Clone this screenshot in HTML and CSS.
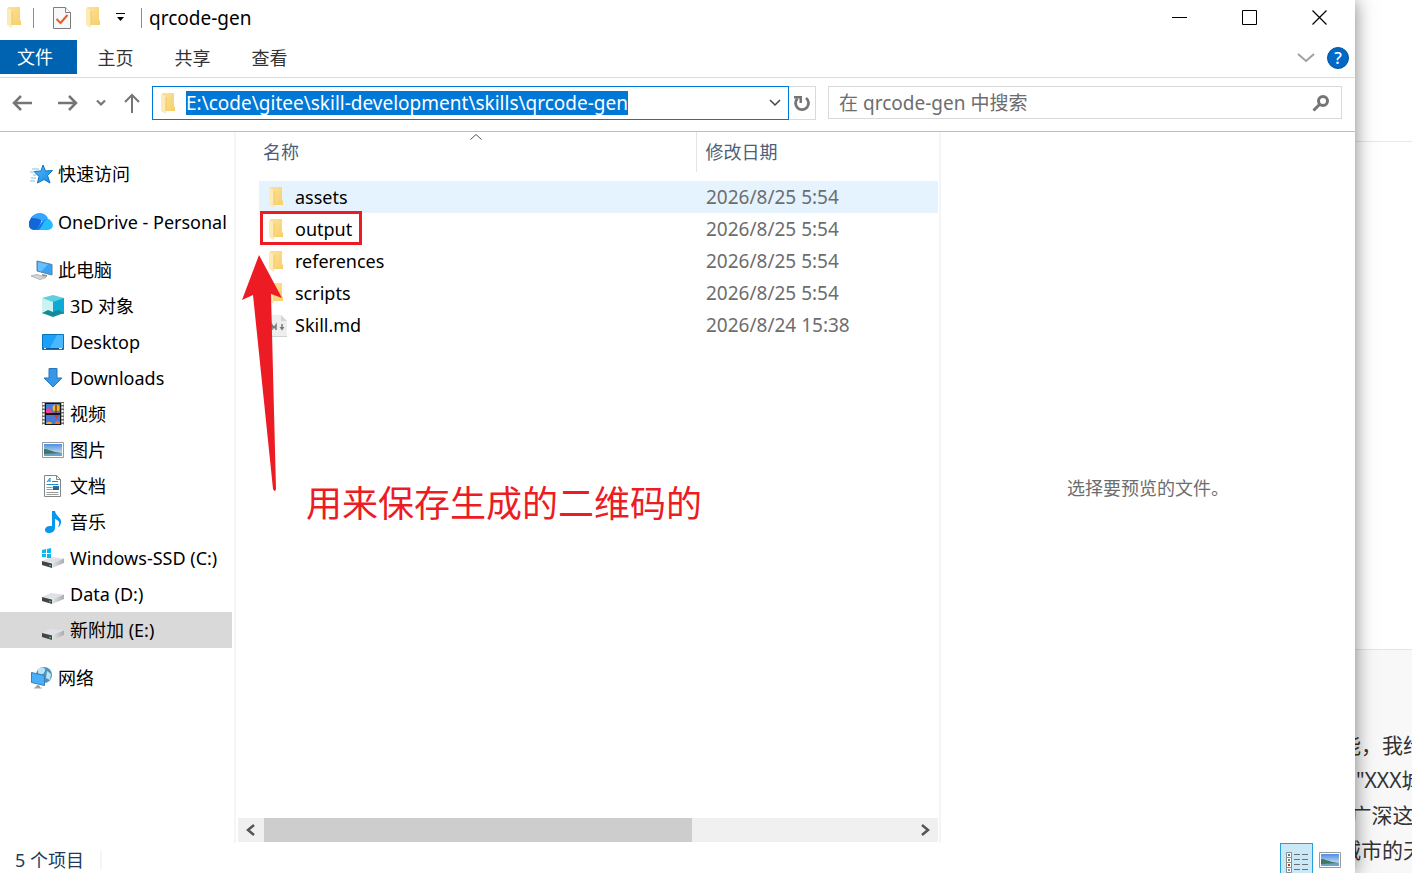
FILE: index.html
```html
<!DOCTYPE html>
<html lang="zh-CN">
<head>
    <meta charset="UTF-8">
    <meta name="viewport" content="width=device-width, initial-scale=1.0">
    <title>qrcode-gen</title>
    <link rel="stylesheet" href="styles.css">
</head>
<body>
    <!-- shared icons -->
    <svg class="sprites" aria-hidden="true">
        <defs>
            <linearGradient id="gold" x1="0" y1="0" x2="1" y2="1">
                <stop offset="0" stop-color="#fde29a"/><stop offset="1" stop-color="#f6cf6a"/>
            </linearGradient>
            <linearGradient id="sky" x1="0" y1="0" x2="0" y2="1">
                <stop offset="0" stop-color="#4f8fe0"/><stop offset="1" stop-color="#e8f3fb"/>
            </linearGradient>
            <linearGradient id="blue" x1="0" y1="0" x2="1" y2="1">
                <stop offset="0" stop-color="#59b9fa"/><stop offset="1" stop-color="#1389e6"/>
            </linearGradient>
            <linearGradient id="metal" x1="0" y1="0" x2="1" y2="0">
                <stop offset="0" stop-color="#e3e5e8"/><stop offset="1" stop-color="#a9adb2"/>
            </linearGradient>
        </defs>
        <symbol id="folder" viewBox="0 0 14 21">
            <path d="M1 0h12v13l1 1v4H3z" fill="url(#gold)"/>
            <path d="M0 1l5 2.500V21L0 18z" fill="#fdeab4"/>
            <path d="M5 4v14" stroke="#efc766"/>
        </symbol>
        <symbol id="drive" viewBox="0 0 22 14">
            <path d="M0 6L9 2l13 1.500L12 8z" fill="#dfe1e4"/>
            <path d="M0 6l10 2.500V13L0 10z" fill="#414549"/>
            <path d="M10 8.500l12-5V8l-12 5z" fill="url(#metal)"/>
            <path d="M7 9.500l2 .5v1.500L7 11z" fill="#35c24a"/>
        </symbol>
        <symbol id="photo" viewBox="0 0 22 16">
            <path d="M.5.5h21v15H.5z" fill="#fff" stroke="#9a9a9a"/>
            <path d="M2 2h18v12H2z" fill="url(#sky)"/>
            <path d="M2 7c4 0 7 2 11 3l7 1v1H2z" fill="#3d7862"/>
            <path d="M2 12l18-1v3H2z" fill="#6aa3c9"/>
        </symbol>
    </svg>

    <div class="desktop">
        <main class="window">
            <header class="titlebar">
                <svg class="folder"><use href="#folder"/></svg>
                <span class="divider"></span>
                <button class="quick" aria-label="属性">
                    <svg width="18" height="22" viewBox="0 0 18 22">
                        <path d="M.5.5h12l5 5v16H.5z" fill="#f7f8fa" stroke="#7d7d7d"/>
                        <path d="M12.500.5v5h5" fill="#fff" stroke="#7d7d7d"/>
                        <path d="M3.500 12l4 4 7-8" fill="none" stroke="#f0591c" stroke-width="2"/>
                    </svg>
                </button>
                <button class="quick" aria-label="新建文件夹"><svg class="folder"><use href="#folder"/></svg></button>
                <button class="quick" aria-label="自定义快速访问工具栏">
                    <svg width="9" height="9" viewBox="0 0 9 9"><path d="M0 .5h9" stroke="#000"/><path d="M1 4h7L4.500 8z"/></svg>
                </button>
                <span class="divider"></span>
                <h1>qrcode-gen</h1>
                <div class="controls">
                    <button aria-label="最小化"><svg width="16" height="16" viewBox="0 0 16 16"><path d="M0 7.500h15" stroke="#000"/></svg></button>
                    <button aria-label="最大化"><svg width="16" height="16" viewBox="0 0 16 16"><path d="M.5.5h14v14H.5z" fill="none" stroke="#000"/></svg></button>
                    <button aria-label="关闭"><svg width="16" height="16" viewBox="0 0 16 16"><path d="M.5.5l14 14M14.500.5l-14 14" stroke="#000" stroke-width="1.200"/></svg></button>
                </div>
            </header>

            <nav class="tabs">
                <button class="tab active">文件</button>
                <button class="tab">主页</button>
                <button class="tab">共享</button>
                <button class="tab">查看</button>
                <div class="tabs-end">
                    <button aria-label="展开功能区"><svg width="18" height="10" viewBox="0 0 18 10"><path d="M1 1l8 7 8-7" fill="none" stroke="#a0a0a0" stroke-width="2"/></svg></button>
                    <button class="help" aria-label="帮助">?</button>
                </div>
            </nav>

            <div class="addressbar">
                <div class="history">
                    <button class="back" aria-label="后退"><svg width="20" height="18" viewBox="0 0 20 18"><path d="M20 9H2M9 2L2 9l7 7" fill="none" stroke="#757575" stroke-width="2.500"/></svg></button>
                    <button aria-label="前进"><svg width="20" height="18" viewBox="0 0 20 18"><path d="M0 9h18M11 2l7 7-7 7" fill="none" stroke="#757575" stroke-width="2.500"/></svg></button>
                    <button aria-label="最近浏览的位置"><svg width="10" height="8" viewBox="0 0 10 8"><path d="M1 1.500l4 4 4-4" fill="none" stroke="#757575" stroke-width="2.200"/></svg></button>
                    <button aria-label="上移"><svg width="16" height="20" viewBox="0 0 16 20"><path d="M8 20V2M1 9l7-7 7 7" fill="none" stroke="#757575" stroke-width="2"/></svg></button>
                </div>
                <div class="address">
                    <svg class="folder"><use href="#folder"/></svg>
                    <input id="path" type="text" aria-label="地址" spellcheck="false" value="E:\code\gitee\skill-development\skills\qrcode-gen">
                    <button aria-label="以前的位置"><svg width="12" height="8" viewBox="0 0 12 8"><path d="M1 1l5 5 5-5" fill="none" stroke="#444" stroke-width="1.500"/></svg></button>
                </div>
                <button class="refresh" aria-label="刷新">
                    <svg width="18" height="18" viewBox="0 0 18 18">
                        <path d="M4.500 4.500a6.500 6.500 0 1 0 8.500-.5" fill="none" stroke="#757575" stroke-width="2.800"/>
                        <path d="M1 2h8v7H6.500V4.500H1z" fill="#757575"/>
                    </svg>
                </button>
                <div class="search">
                    <input type="search" aria-label="搜索" placeholder="在 qrcode-gen 中搜索">
                    <svg width="18" height="18" viewBox="0 0 18 18"><circle cx="11" cy="7" r="4.500" fill="none" stroke="#757575" stroke-width="3"/><path d="M8 10l-6.500 6.500" stroke="#757575" stroke-width="3"/></svg>
                </div>
            </div>

            <div class="content">
                <nav class="sidebar">
                    <a href="#quick">
                        <svg class="icon" viewBox="0 0 24 24">
                            <path d="M14 3l2.500 6 7-.5-5 5 2.500 7.500-6-3.500L8.500 21l1.500-6.500L5 9.500l7-.5z" fill="url(#blue)" stroke="#1273be"/>
                            <path d="M3 7h7M1 10h5M4 13h3M2 16h5M1 19h5" stroke="#7fc0ef"/>
                        </svg>快速访问
                    </a>
                    <a href="#onedrive">
                        <svg class="icon" viewBox="0 0 24 24">
                            <path d="M6 20A6 6 0 0 1 1 10a7 7 0 0 1 7-5l6 2-5 13z" fill="#1267d8"/>
                            <path d="M2 8C6 2 15 1 19 8l-4 5c-2-4-8-5-13-5z" fill="#36a5fb"/>
                            <path d="M5 20c4 0 5-5 8-8 3-4 7-4 9-1 4 4 1 9-3 9z" fill="#25bcfb"/>
                            <path d="M5 20c4 0 5-4 8-8 2-2 4-3 6-3-6 1-5 9-10 11z" fill="#116ff0"/>
                        </svg>OneDrive - Personal
                    </a>
                    <div class="group">
                        <a href="#pc">
                            <svg class="icon" viewBox="0 0 24 24">
                                <path d="M8 3l15 3.500v10.500L8 13z" fill="#36a3f7" stroke="#607f99"/>
                                <path d="M9 4l10 2.500-7 7-3-1z" fill="#69c0ff"/>
                                <path d="M13 16l5 1v2l-5-1z" fill="#8d969d"/>
                                <path d="M2 18l6-1.500 9 3-6 2z" fill="#d4d7da" stroke="#b0b5ba"/>
                            </svg>此电脑
                        </a>
                        <a class="child" href="#3d">
                            <svg class="icon" viewBox="0 0 24 24">
                                <path d="M1 4l11-3 11 3-6 4H7z" fill="#5ecfe0"/>
                                <path d="M1 4l6 4v11l-6 1z" fill="#b5f0ef"/><path d="M23 4l-6 4v11l6 1z" fill="#08a2d3"/>
                                <path d="M1 4l11 4v12l-11-2z" fill="#cdf3f0"/><path d="M23 4l-11 4v12l11-2z" fill="#0fa9d6"/>
                                <path d="M1 19l6-3 5 2 5-2 6 3-11 4z" fill="#128a99"/>
                            </svg>3D 对象
                        </a>
                        <a class="child" href="#desktop">
                            <svg class="icon" viewBox="0 0 24 24">
                                <path d="M1.500 4.500h21v15h-21z" fill="#1ba1fa" stroke="#0876bd"/>
                                <path d="M16 5h6v13H9z" fill="#4bb7ff"/><path d="M2 18.500h20" stroke="#075d9c"/><path d="M3 18.500h2M18 18.500h3" stroke="#fff"/>
                            </svg>Desktop
                        </a>
                        <a class="child" href="#downloads">
                            <svg class="icon" viewBox="0 0 24 24"><path d="M8 2.500h8V12h5l-9 9-9-9h5z" fill="#3995e5" stroke="#2777bd"/></svg>Downloads
                        </a>
                        <a class="child" href="#videos">
                            <svg class="icon" viewBox="0 0 24 24">
                                <path d="M1 0h22v23H1z" fill="#6a6a6a"/>
                                <path d="M2.500 1v22M21.500 1v22" stroke="#fff" stroke-width="2" stroke-dasharray="2 1.500"/>
                                <path d="M4 1h16v22H4z" fill="#151515"/>
                                <path d="M5 2h14v9H5zM5 13h14v9H5z" fill="#4a7ad8"/>
                                <path d="M5 11V8l3-2 4 5z" fill="#ef428b"/><circle cx="15" cy="6" r="3.500" fill="#f1b91c"/><path d="M15 2.500v7M13.500 10h3" stroke="#8c3d20" stroke-width="1.500"/>
                                <path d="M13 13h5l-2.500 4z" fill="#d34327"/><path d="M5 22c0-3 6-3 6 0z" fill="#efb52b"/><path d="M14 22c0-4 5-4 5 0z" fill="#f47124"/>
                            </svg>视频
                        </a>
                        <a class="child" href="#pictures">
                            <svg class="icon"><use href="#photo" x="1" y="4" width="22" height="16"/></svg>图片
                        </a>
                        <a class="child" href="#documents">
                            <svg class="icon" viewBox="0 0 24 24">
                                <path d="M3.500 1.500h12l4 4v17h-16z" fill="#fff" stroke="#858585"/><path d="M15.500 1.500v4h4" fill="none" stroke="#858585"/>
                                <path d="M6 8l3-4v4M7 7h2" fill="none" stroke="#178fc8"/>
                                <path d="M11 7.500h6M5.500 10.500h12" stroke="#178fc8"/><path d="M5.500 13.500h6M5.500 15.500h6M5.500 18.500h12M5.500 20.500h12" stroke="#9a9a9a"/>
                                <path d="M12 12h6v4h-6z" fill="#2d69ad"/><path d="M12 14l6 1v1h-6z" fill="#2b6957"/>
                            </svg>文档
                        </a>
                        <a class="child" href="#music">
                            <svg class="icon" viewBox="0 0 24 24">
                                <path d="M11 1h3c1 6 7 6 6 12-1 3-2 4-3 4 3-5 0-7-3-8v9c0 3-3 5-6 5-6 0-5-7 1-7h2z" fill="#0798ee"/>
                            </svg>音乐
                        </a>
                        <a class="child" href="#c">
                            <svg class="icon"><use href="#drive" x="1" y="9" width="22" height="14"/><path d="M1 4l4-1v4H1zM6 3l4-1v5H6zM1 8h4v3H1zM6 8h4v4H6z" fill="#08b8ee"/></svg>Windows-SSD (C:)
                        </a>
                        <a class="child" href="#d">
                            <svg class="icon"><use href="#drive" x="1" y="9" width="22" height="14"/></svg>Data (D:)
                        </a>
                        <a class="child selected" href="#e">
                            <svg class="icon"><use href="#drive" x="1" y="9" width="22" height="14"/></svg>新附加 (E:)
                        </a>
                    </div>
                    <a href="#network">
                        <svg class="icon" viewBox="0 0 24 24">
                            <circle cx="15" cy="9" r="8" fill="#4b94bf"/><path d="M9 3c4-3 8-1 7 2s-4 5-7 2zM18 5l4 3-1 6-4-2z" fill="#bde3f2"/>
                            <path d="M2.500 6.500l13 3v10l-13-3z" fill="#48b0fa" stroke="#3b7fae"/><path d="M8 19l3 1v2H6z" fill="#969ea5"/><path d="M5 22h8" stroke="#a4a9ad"/>
                        </svg>网络
                    </a>
                </nav>

                <section class="files">
                    <svg class="sort" width="12" height="6" viewBox="0 0 12 6"><path d="M.5 5.500L6 .5l5.500 5" fill="none" stroke="#555"/></svg>
                    <table>
                        <thead>
                            <tr><th scope="col">名称</th><th scope="col">修改日期</th></tr>
                        </thead>
                        <tbody>
                            <tr class="hover"><td><svg class="folder"><use href="#folder"/></svg>assets</td><td>2026/8/25 5:54</td></tr>
                            <tr><td class="marked"><svg class="folder"><use href="#folder"/></svg>output</td><td>2026/8/25 5:54</td></tr>
                            <tr><td><svg class="folder"><use href="#folder"/></svg>references</td><td>2026/8/25 5:54</td></tr>
                            <tr><td><svg class="folder"><use href="#folder"/></svg>scripts</td><td>2026/8/25 5:54</td></tr>
                            <tr>
                                <td>
                                    <svg class="folder md" viewBox="0 0 18 22">
                                        <path d="M0 0h12l6 6v16H0z" fill="#eee"/><path d="M12 0l6 6h-6z" fill="#d5d5d5"/><path d="M0 21.500h18" stroke="#d0d0d0"/>
                                        <path d="M3 15v-5l2 3 2-3v5M13 9v5" fill="none" stroke="#777" stroke-width="1.500"/><path d="M10.500 12h5L13 15.500z" fill="#777"/>
                                    </svg>Skill.md
                                </td>
                                <td>2026/8/24 15:38</td>
                            </tr>
                        </tbody>
                    </table>
                    <div class="note">
                        <svg width="42" height="238" viewBox="0 0 42 238"><path d="M18 1L41 44l-11-4 5 195q-1 4-3 0L12 41 1 46z" fill="#ed1c24"/></svg>
                        <p>用来保存生成的二维码的</p>
                    </div>
                    <div class="scrollbar">
                        <button aria-label="向左滚动"><svg width="10" height="12" viewBox="0 0 10 12"><path d="M8 1L2 6l6 5" fill="none" stroke="#555" stroke-width="2.500"/></svg></button>
                        <div class="track"><div class="thumb"></div></div>
                        <button aria-label="向右滚动"><svg width="10" height="12" viewBox="0 0 10 12"><path d="M2 1l6 5-6 5" fill="none" stroke="#555" stroke-width="2.500"/></svg></button>
                    </div>
                </section>

                <aside class="preview">选择要预览的文件。</aside>
            </div>

            <footer class="status">
                <span class="count">5 个项目</span>
                <div class="views">
                    <button class="on" aria-label="详细信息">
                        <svg width="22" height="22" viewBox="0 0 22 22">
                            <path d="M.5.5h5v5h-5zM.5 5.500h5v5h-5zM.5 10.500h5v5h-5zM.5 15.500h5v5h-5z" fill="#fff" stroke="#8b8b8b"/>
                            <path d="M2 3h2" stroke="#377fb5" stroke-width="2"/><path d="M2 8h2" stroke="#6a8f3d" stroke-width="2"/><path d="M2 13h2" stroke="#b83b2d" stroke-width="2"/><path d="M2 18h2" stroke="#7b9ab8" stroke-width="2"/>
                            <path d="M8 2.500h6M16 2.500h6M8 7.500h6M16 7.500h6M8 12.500h6M16 12.500h6M8 17.500h6M16 17.500h6" stroke="#707070"/>
                        </svg>
                    </button>
                    <button aria-label="大缩略图"><svg width="22" height="16"><use href="#photo"/></svg></button>
                </div>
            </footer>
        </main>

        <!-- page behind the window -->
        <div class="behind">
            <div class="behind-top"></div>
            <div class="behind-main"></div>
            <div class="behind-text">
                <p>能，我给</p>
                <p>&ensp;&nbsp;"XXX城</p>
                <p>&ensp;广深这</p>
                <p>城市的天</p>
            </div>
        </div>
    </div>

    <script>
        // the path is selected when the window opens
        const path = document.getElementById('path');
        path.focus({ preventScroll: true });
        path.select();
    </script>
</body>
</html>
```

FILE: styles.css
```css
* {
    box-sizing: border-box;
}
body {
    margin: 0;
    font-family: "Noto Sans", "Noto Sans CJK SC", sans-serif;
    font-size: 18px;
    line-height: 24px;
    color: #000;
    overflow: hidden;
}
button {
    display: flex;
    align-items: center;
    justify-content: center;
    padding: 0;
    border: none;
    background: none;
    font: inherit;
    color: inherit;
}
input {
    min-width: 0;
    padding: 0;
    border: none;
    outline: none;
    background: none;
    font: inherit;
    color: inherit;
}
svg {
    display: block;
    flex: none;
}
.sprites {
    position: absolute;
    width: 0;
    height: 0;
}
.folder {
    width: 14px;
    height: 21px;
}
.desktop {
    display: grid;
    grid-template-columns: 1fr 57px;
    min-height: 100vh;
}
.window {
    z-index: 1;
    display: flex;
    flex-direction: column;
    min-width: 0;
    background: #fff;
    box-shadow: 0 0 18px rgba(0, 0, 0, 0.5);
}

/* title bar */
.titlebar {
    display: flex;
    align-items: center;
    height: 40px;
    padding: 0 0 5px 7px;
}
.divider {
    width: 1px;
    height: 20px;
    margin: 0 7px 0 12px;
    background: #8c8c8c;
}
.quick {
    min-width: 18px;
    margin-left: 12px;
}
.quick + .quick {
    margin-left: 13px;
}
.quick + .quick + .quick {
    margin-left: 9px;
}
.quick + .divider {
    margin-left: 12px;
}
h1 {
    margin: 0;
    font-size: 19px;
    font-weight: 400;
}
.controls {
    display: flex;
    margin-left: auto;
}
.controls button {
    width: 70px;
    height: 36px;
}

/* ribbon tabs */
.tabs {
    display: flex;
    height: 38px;
    border-bottom: 1px solid #dadbdc;
}
.tab {
    width: 77px;
    height: 34px;
    padding-top: 2px;
    color: #333;
}
.tab.active {
    padding: 0 7px 0 0;
    background: #0063b1;
    color: #fff;
}
.tabs-end {
    display: flex;
    align-items: center;
    gap: 12px;
    margin-left: auto;
    padding: 0 6px 2px 0;
}
.help {
    width: 22px;
    height: 22px;
    border: 1px solid #07539b;
    border-radius: 50%;
    background: #0069c8;
    color: #fff;
    font-size: 17px;
    font-weight: 500;
}

/* address bar */
.addressbar {
    display: flex;
    height: 54px;
    padding: 8px 13px 0 12px;
    border-bottom: 1px solid #bdbdbd;
}
.history {
    display: flex;
    align-items: center;
    gap: 18px;
    height: 34px;
    margin-right: 12px;
}
.back {
    padding-right: 8px;
}
.address {
    display: flex;
    align-items: center;
    flex: 24;
    min-width: 0;
    height: 34px;
    padding: 0 7px 0 8px;
    border: 1px solid #0078d7;
}
.address input {
    flex: 1;
    height: 24px;
    margin-left: 11px;
    font-size: 19px;
    line-height: 24px;
}
.address input::selection {
    background: #0078d7;
    color: #fff;
}
.refresh {
    width: 27px;
    height: 34px;
    border: 1px solid #d9d9d9;
    border-left: none;
}
.search {
    display: flex;
    align-items: center;
    flex: 19;
    min-width: 0;
    height: 33px;
    margin-left: 12px;
    padding: 0 11px 0 10px;
    border: 1px solid #d9d9d9;
}
.search input {
    flex: 1;
    font-size: 19px;
}
.search input::placeholder {
    color: #6d6d6d;
}

/* panes */
.content {
    display: flex;
    flex: 1;
}
.sidebar {
    display: flex;
    flex-direction: column;
    gap: 12px;
    width: 236px;
    padding-top: 24px;
    border-right: 2px solid #f5f5f5;
}
.sidebar a {
    display: flex;
    align-items: center;
    gap: 5px;
    height: 36px;
    margin-right: 2px;
    padding-left: 29px;
    color: #000;
    text-decoration: none;
    white-space: nowrap;
}
.sidebar .child {
    padding-left: 41px;
}
.sidebar .selected {
    background: #d9d9d9;
}
.icon {
    width: 24px;
    height: 24px;
}
.files {
    position: relative;
    display: flex;
    flex-direction: column;
    width: 705px;
    padding-left: 2px;
    border-right: 2px solid #f5f5f5;
}
.sort {
    position: absolute;
    top: 2px;
    left: 234px;
}
table {
    width: 679px;
    margin-left: 21px;
    border-collapse: collapse;
    table-layout: fixed;
}
th {
    height: 40px;
    padding: 0 0 0 4px;
    color: #4c607a;
    font-weight: 400;
    text-align: left;
}
th:first-child {
    width: 437px;
    border-right: 1px solid #e5e5e5;
}
th + th {
    padding-left: 9px;
}
tbody::before {
    content: "";
    display: block;
    height: 9px;
}
td {
    height: 32px;
    padding: 0 0 0 10px;
    color: #6d6d6d;
    font-size: 19px;
}
td:first-child {
    padding-left: 36px;
    color: #000;
    font-size: 18px;
    position: relative;
}
td .folder {
    position: absolute;
    top: 6px;
    left: 10px;
}
td .md {
    width: 18px;
    height: 22px;
}
.hover {
    background: #e5f3ff;
}

/* red mark-up over the list */
.marked::after {
    content: "";
    position: absolute;
    top: -2px;
    left: 1px;
    width: 96px;
    height: 28px;
    border: 3px solid #ed1c24;
}
.note {
    position: absolute;
    top: 122px;
    left: 5px;
    display: flex;
    align-items: flex-end;
    gap: 23px;
    color: #ed1c24;
}
.note p {
    margin: 0 0 -36px;
    font-size: 36px;
    line-height: 48px;
    white-space: nowrap;
}
.scrollbar {
    display: flex;
    height: 24px;
    margin: auto 1px 1px 0;
    background: #f0f0f0;
}
.scrollbar button {
    width: 26px;
}
.track {
    flex: 1;
}
.thumb {
    width: 66%;
    height: 24px;
    background: #cdcdcd;
}
.preview {
    display: flex;
    flex: 1;
    align-items: center;
    justify-content: center;
    color: #6d6d6d;
}

/* status bar */
.status {
    display: flex;
    height: 30px;
    padding-left: 15px;
}
.count {
    height: 18px;
    margin-top: 8px;
    padding-right: 16px;
    border-right: 2px solid #f5f5f5;
    color: #1e395b;
    line-height: 18px;
}
.views {
    display: flex;
    margin-left: auto;
    padding-right: 9px;
}
.views button {
    width: 33px;
    height: 30px;
    padding-top: 4px;
}
.views .on {
    padding-top: 8px;
    border: 1px solid #26a0da;
    border-bottom: none;
    background: #cbe8f6;
}

/* background page */
.behind {
    display: flex;
    flex-direction: column;
    min-width: 0;
    background: #fff;
    color: #333;
}
.behind-top {
    height: 142px;
    border-bottom: 1px solid #e8e8e8;
}
.behind-main {
    flex: 1;
}
.behind-text {
    height: 224px;
    margin-left: -15px;
    padding-top: 78px;
    border-top: 1px solid #e5e5e5;
    background: #f8f8f8;
    overflow: hidden;
    font-size: 21px;
    line-height: 35px;
    white-space: nowrap;
}
.behind-text p {
    margin: 0;
}
```
